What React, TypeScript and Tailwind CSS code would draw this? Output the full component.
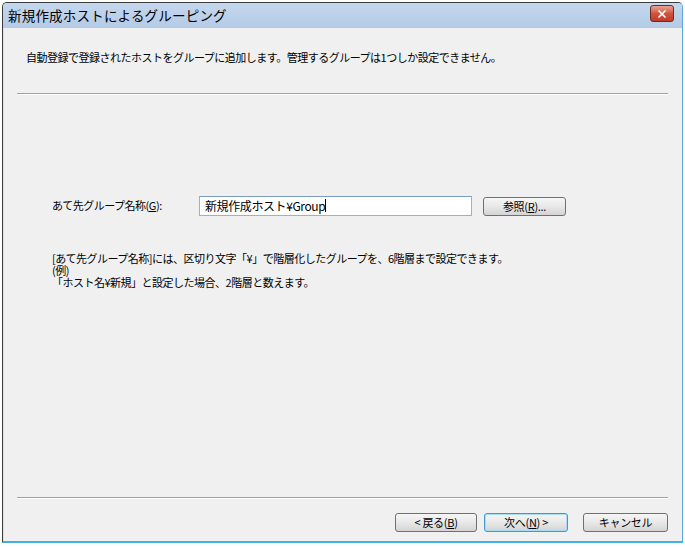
import { X } from 'lucide-react';

const font = { fontFamily: '"Noto Sans CJK JP", "Liberation Sans", sans-serif' };

type WinButtonProps = {
  children: React.ReactNode;
  width: string;
  focused?: boolean;
};

const WinButton = ({ children, width, focused }: WinButtonProps) => (
  <button
    type="button"
    className={`${width} h-[19px] rounded-[3px] border text-[11px] tracking-[-0.3px] leading-none text-black flex items-center justify-center bg-gradient-to-b from-[#f6f6f6] via-[#e8e8e8] to-[#d4d4d4] ${
      focused ? 'border-[#3c9ad4] shadow-[inset_0_0_0_1px_#a8dcf4]' : 'border-[#707070]'
    }`}
  >
    {children}
  </button>
);

const App = () => {
  return (
    <div className="w-[685px] h-[547px] bg-white" style={font}>
      <div className="ml-[2px] pt-[2px] w-[681px] h-[543px]">
        <div className="w-full h-full flex flex-col rounded-t-[5px] border border-[#3b3b3b] border-b-[#42b0e0] border-b-2 border-r-[#5aa9d6] bg-[#f0f0f0] overflow-hidden">
          {/* title bar */}
          <div className="h-[25px] shrink-0 flex items-center justify-between pl-[5px] pr-[8px] bg-gradient-to-b from-[#c4d7ee] to-[#b4cbe6]">
            <span className="text-[13.5px] text-black leading-none tracking-[0.2px]">新規作成ホストによるグルーピング</span>
            <div className="w-[24px] h-[17px] mt-[-4px] rounded-[3px] border border-[#6b2c24] bg-gradient-to-b from-[#e6a596] via-[#d0543c] to-[#c0392b] flex items-center justify-center">
              <X size={12} strokeWidth={3.5} className="text-white" />
            </div>
          </div>

          <div className="flex-1 flex flex-col border-l border-[#cfe6f5] pl-[13px] pr-[14px] text-[11px] tracking-[-0.5px]">
            <p className="mt-[24px] ml-[9px] leading-none text-black">
              自動登録で登録されたホストをグループに追加します。管理するグループは1つしか設定できません。
            </p>
            <div className="mt-[30px] h-[2px] border-t border-[#a0a0a0] border-b border-b-white" />

            <div className="mt-[100px] flex items-center pl-[35px]">
              <span className="w-[147px] text-black">
                あて先グループ名称(<span className="underline">G</span>):
              </span>
              <div className="w-[273px] h-[20px] border border-[#abadb3] border-t-[#7a9cc0] bg-white flex items-center pl-[5px] text-[12px] tracking-[-0.4px] text-black">
                新規作成ホスト¥Group<span className="inline-block w-px h-[13px] bg-black" />
              </div>
              <div className="ml-[11px] mt-[2px]">
                <WinButton width="w-[83px]">
                  参照(<span className="underline">R</span>)...
                </WinButton>
              </div>
            </div>

            <div className="mt-[36px] pl-[35px] leading-[12px] text-black">
              <p>[あて先グループ名称]には、区切り文字「¥」で階層化したグループを、6階層まで設定できます。</p>
              <p>(例)</p>
              <p>「ホスト名¥新規」と設定した場合、2階層と数えます。</p>
            </div>

            <div className="flex-1" />
            <div className="h-[2px] border-t border-[#a0a0a0] border-b border-b-white" />
            <div className="h-[42px] flex items-start justify-end pt-[14px] gap-[7px] tracking-normal">
              <WinButton width="w-[82px]">
                &lt; 戻る(<span className="underline">B</span>)
              </WinButton>
              <WinButton width="w-[84px]" focused>
                次へ(<span className="underline">N</span>) &gt;
              </WinButton>
              <div className="ml-[8px]">
                <WinButton width="w-[85px]">キャンセル</WinButton>
              </div>
            </div>
          </div>
        </div>
      </div>
    </div>
  );
};

export default App;
